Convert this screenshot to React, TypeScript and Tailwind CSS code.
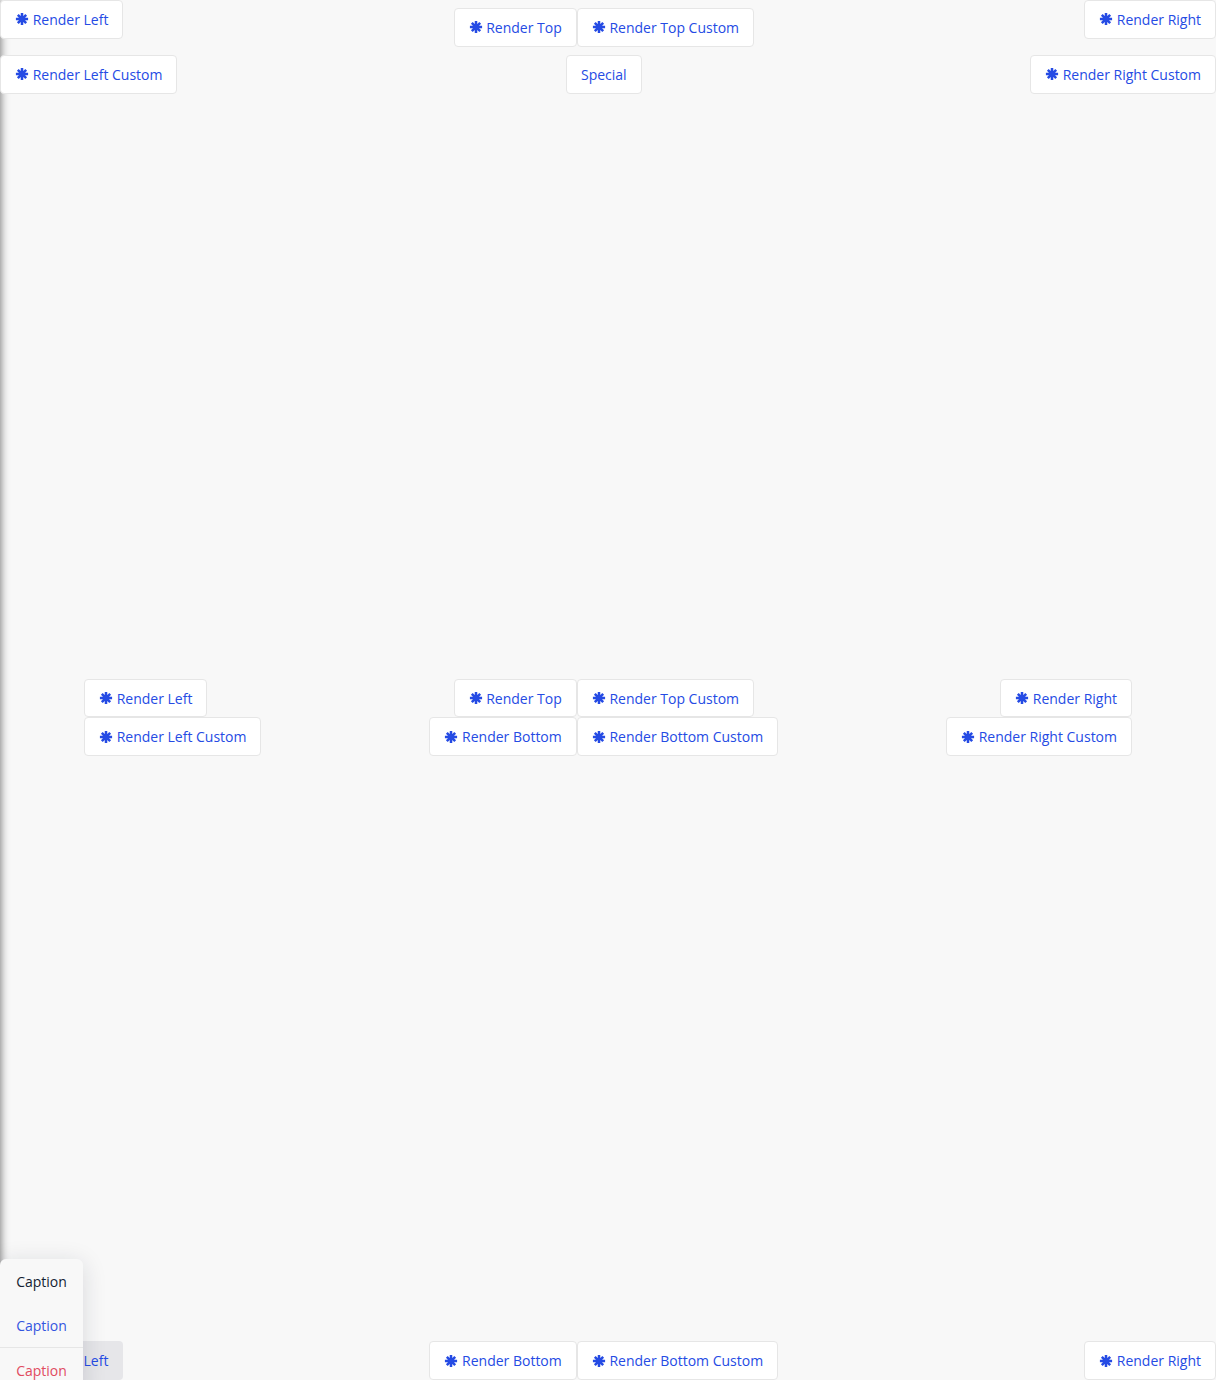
import React from "react";

function Asterisk() {
  return (
    <svg viewBox="0 0 14 14" className="h-[14px] w-[14px] shrink-0" fill="none" stroke="currentColor">
      <path strokeWidth="2.5" d="M7 .9v12.2M.9 7h12.2M2.8 2.8l8.4 8.4M11.2 2.8l-8.4 8.4" />
      <circle cx="7" cy="7" r="2.6" fill="currentColor" />
    </svg>
  );
}

function Button({ label, icon = true, pressed = false }: { label: string; icon?: boolean; pressed?: boolean }) {
  const look = pressed ? "border-transparent bg-[#e6e6e9] bg-clip-border" : "border-[#e6e6e6] bg-white";
  return (
    <button
      className={`flex h-[38.6px] shrink-0 items-center gap-[3.64px] whitespace-nowrap rounded-[4px] border px-[14px] text-[14px] leading-[21px] text-[#254be4] ${look}`}
    >
      {icon && <Asterisk />}
      <span>{label}</span>
    </button>
  );
}

function Menu() {
  return (
    <div className="absolute left-0 top-[1259px] w-[83px] rounded-[6px] bg-[#f8f8f8] text-center text-[14px] leading-[21px] shadow-[0_4px_24px_rgba(19,29,50,0.14)]">
      <div className="flex h-[44px] items-center justify-center text-[#131d32]">Caption</div>
      <div className="flex h-[44px] items-center justify-center text-[#3355e0]">Caption</div>
      <div className="flex h-[46px] items-center justify-center border-t border-[#e6e6e6] text-[#e14b5f]">Caption</div>
    </div>
  );
}

export default function App() {
  return (
    <div className="relative flex h-[1380px] w-[1216px] flex-col justify-between overflow-hidden bg-[#f8f8f8] font-['Open_Sans',sans-serif]">
      <div className="absolute -left-5 top-0 h-full w-5 shadow-[0_0_10px_rgba(0,0,0,0.6)]" />
      <header className="relative grid grid-cols-[1fr_auto_1fr]">
        <div className="flex flex-col items-start gap-[16.4px]">
          <Button label="Render Left" />
          <Button label="Render Left Custom" />
        </div>
        <div className="flex flex-col items-center gap-[8.4px] pr-[8.4px] pt-2">
          <div className="flex">
            <Button label="Render Top" />
            <Button label="Render Top Custom" />
          </div>
          <Button label="Special" icon={false} />
        </div>
        <div className="flex flex-col items-end gap-[16.4px]">
          <Button label="Render Right" />
          <Button label="Render Right Custom" />
        </div>
      </header>
      <main className="relative grid grid-cols-[1fr_auto_1fr] px-[84px]">
        <div className="flex flex-col items-start">
          <Button label="Render Left" />
          <Button label="Render Left Custom" />
        </div>
        <div className="flex flex-col items-center pr-[8.4px]">
          <div className="flex">
            <Button label="Render Top" />
            <Button label="Render Top Custom" />
          </div>
          <div className="flex">
            <Button label="Render Bottom" />
            <Button label="Render Bottom Custom" />
          </div>
        </div>
        <div className="flex flex-col items-end">
          <Button label="Render Right" />
          <Button label="Render Right Custom" />
        </div>
      </main>
      <footer className="relative grid grid-cols-[1fr_auto_1fr]">
        <div className="flex justify-start">
          <Button label="Render Left" pressed />
        </div>
        <div className="flex pr-[8.4px]">
          <Button label="Render Bottom" />
          <Button label="Render Bottom Custom" />
        </div>
        <div className="flex justify-end">
          <Button label="Render Right" />
        </div>
      </footer>
      <Menu />
    </div>
  );
}
